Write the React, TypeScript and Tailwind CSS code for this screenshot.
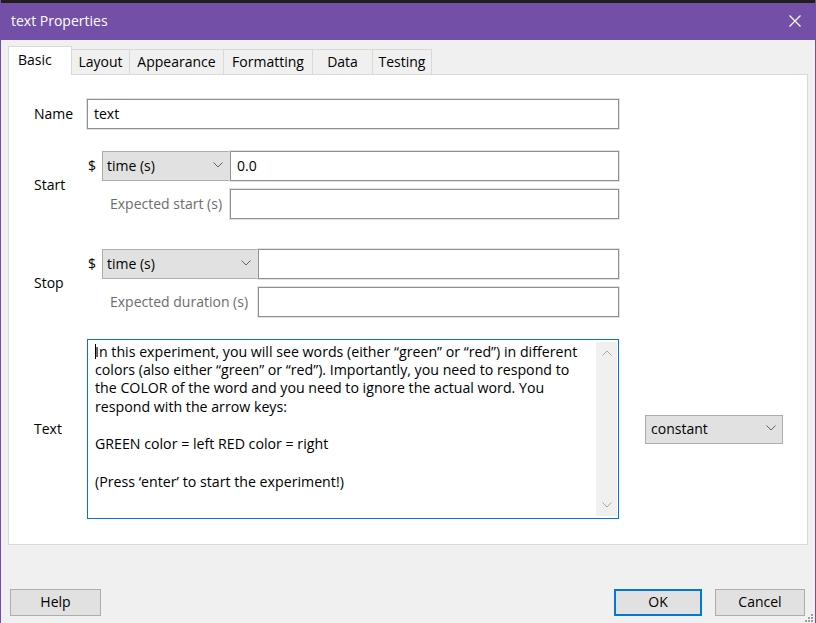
import React from "react";

function Chevron({ up = false, color = "#606060" }: { up?: boolean; color?: string }) {
  return (
    <svg width="10" height="6" viewBox="0 0 10 6" className="shrink-0">
      <polyline
        points={up ? "0.5,5.5 5,1 9.5,5.5" : "0.5,0.5 5,5 9.5,0.5"}
        fill="none"
        stroke={color}
        strokeWidth="1"
      />
    </svg>
  );
}

function Select({ value, width }: { value: string; width: string }) {
  return (
    <div
      className={`flex h-[30px] ${width} items-center justify-between border border-[#adadad] bg-[#e1e1e1] pb-[2px] pl-[4px] pr-[6px]`}
    >
      <span>{value}</span>
      <Chevron />
    </div>
  );
}

function Field({ value = "", width = "flex-1" }: { value?: string; width?: string }) {
  return (
    <div
      className={`flex h-[30px] ${width} items-center border border-[#8f8f8f] bg-white px-[6px] pb-[2px] shadow-[0_0_0_1px_#e3e3e3]`}
    >
      {value}
    </div>
  );
}

const tabs = ["Layout", "Appearance", "Formatting", "Data", "Testing"];
const tabWidths = ["w-[58px]", "w-[94px]", "w-[89px]", "w-[60px]", "w-[59px]"];

const lines = [
  "In this experiment, you will see words (either \u201cgreen\u201d or \u201cred\u201d) in different",
  "colors (also either \u201cgreen\u201d or \u201cred\u201d). Importantly, you need to respond to",
  "the COLOR of the word and you need to ignore the actual word. You",
  "respond with the arrow keys:",
  "",
  "GREEN color = left RED color = right",
  "",
  "(Press \u2018enter\u2019 to start the experiment!)",
];

export default function App() {
  return (
    <div className="flex h-[623px] w-[816px] flex-col overflow-hidden border-x border-[#744fa7] bg-[#f0f0f0] font-['Open_Sans',sans-serif] text-[14px] text-black">
      {/* title bar */}
      <div className="h-[3px] bg-[#1e1e1e]" />
      <div className="flex h-[37px] items-center justify-between bg-[#744fa7] pb-[2px] pl-[10px] pr-[14px] text-white">
        <span className="text-[14px]">text Properties</span>
        <svg width="12" height="12" viewBox="0 0 12 12">
          <path d="M0.5 0.5 L11.5 11.5 M11.5 0.5 L0.5 11.5" stroke="white" strokeWidth="1.2" />
        </svg>
      </div>

      {/* tabs */}
      <div className="mt-[6px] flex items-end pl-[7px]">
        <div className="relative z-10 -mb-px flex h-[29px] w-[64px] items-start border border-b-0 border-[#d9d9d9] bg-white pl-[9px] pt-[2px]">
          Basic
        </div>
        {tabs.map((t, i) => (
          <div
            key={t}
            className={`flex h-[25px] ${tabWidths[i]} items-center justify-center border border-l-0 border-b-0 border-[#d9d9d9] bg-[#f0f0f0] pb-[2px]`}
          >
            {t}
          </div>
        ))}
      </div>

      {/* panel */}
      <div className="mx-[7px] flex h-[471px] flex-col border border-[#d9d9d9] bg-white pt-[24px]">
        {/* Name */}
        <div className="flex items-center">
          <div className="w-[78px] pb-[2px] pl-[25px]">Name</div>
          <Field value="text" width="w-[532px]" />
        </div>

        {/* Start */}
        <div className="mt-[22px] flex items-center">
          <div className="w-[78px] pb-[2px] pl-[25px]">Start</div>
          <div className="flex w-[532px] flex-col gap-[8px]">
            <div className="flex items-center">
              <span className="w-[15px] pb-[2px] pl-[1px]">$</span>
              <Select value="time (s)" width="w-[128px]" />
              <Field value="0.0" />
            </div>
            <div className="flex items-center">
              <span className="w-[143px] pb-[2px] pl-[23px] text-[#6d6d6d]">Expected start (s)</span>
              <Field />
            </div>
          </div>
        </div>

        {/* Stop */}
        <div className="mt-[30px] flex items-center">
          <div className="w-[78px] pb-[2px] pl-[25px]">Stop</div>
          <div className="flex w-[532px] flex-col gap-[8px]">
            <div className="flex items-center">
              <span className="w-[15px] pb-[2px] pl-[1px]">$</span>
              <Select value="time (s)" width="w-[156px]" />
              <Field />
            </div>
            <div className="flex items-center">
              <span className="w-[171px] pb-[2px] pl-[23px] text-[#6d6d6d]">Expected duration (s)</span>
              <Field />
            </div>
          </div>
        </div>

        {/* Text */}
        <div className="mt-[22px] flex items-center">
          <div className="w-[78px] pb-[2px] pl-[25px]">Text</div>
          <div className="relative flex h-[180px] w-[532px] border border-[#0078d7] bg-white">
            <div className="flex-1 pl-[7px] pt-[2px] text-[14.2px] leading-[18.7px]">
              {lines.map((l, i) => (
                <div key={i} className="h-[18.7px] whitespace-pre">
                  {i === 0 && <span className="mr-[-1px] inline-block h-[15px] w-px translate-y-[2px] bg-black align-baseline" />}
                  {l}
                </div>
              ))}
            </div>
            <div className="my-[2px] mr-[1px] flex w-[21px] flex-col items-center justify-between bg-[#f0f0f0] py-[8px]">
              <Chevron up color="#a6a6a6" />
              <Chevron color="#a6a6a6" />
            </div>
          </div>
          <div className="ml-[26px]">
            <div className="flex h-[29px] w-[138px] items-center justify-between border border-[#adadad] bg-[#e1e1e1] pb-[2px] pl-[5px] pr-[6px]">
              <span>constant</span>
              <Chevron />
            </div>
          </div>
        </div>
      </div>

      {/* buttons */}
      <div className="relative mt-[44px] flex items-center justify-between pl-[9px] pr-[10px]">
        <button className="h-[27px] w-[91px] border border-[#adadad] bg-[#e1e1e1] pb-[2px]">Help</button>
        <div className="flex gap-[13px]">
          <button className="h-[27px] w-[88px] border-2 border-[#0078d7] bg-[#e1e1e1] pb-[2px]">OK</button>
          <button className="h-[27px] w-[90px] border border-[#adadad] bg-[#e1e1e1] pb-[2px]">Cancel</button>
        </div>
        <div className="absolute bottom-[-6px] right-[2px] grid grid-cols-3 gap-[1px]">
          {[0, 0, 1, 0, 1, 1, 1, 1, 1].map((v, i) => (
            <span key={i} className={`h-[2px] w-[2px] ${v ? "bg-[#a0a0a0]" : "bg-transparent"}`} />
          ))}
        </div>
      </div>
    </div>
  );
}
